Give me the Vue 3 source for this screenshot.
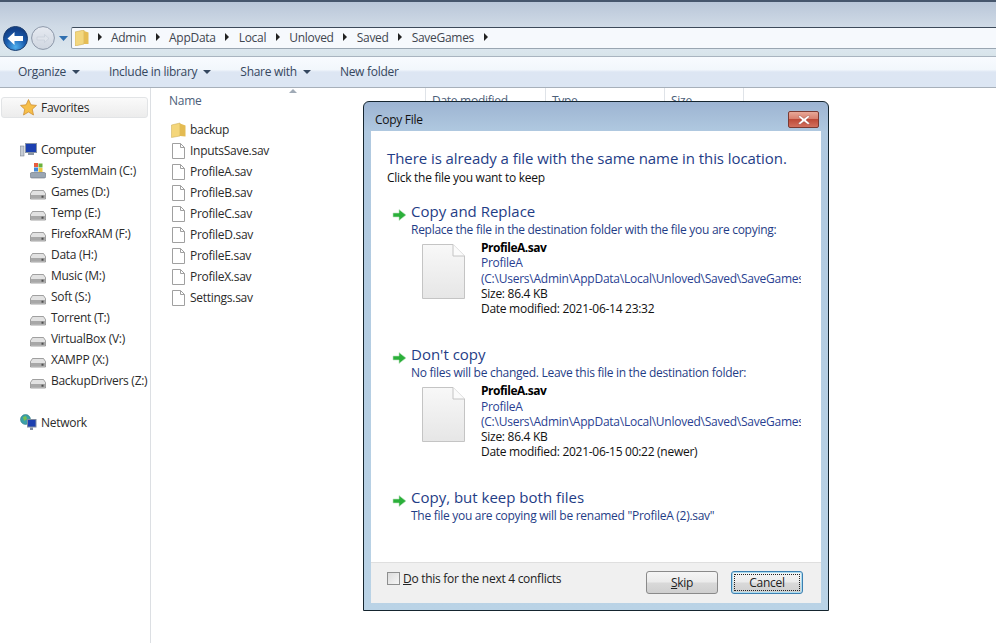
<script setup>
const crumbs = ['Admin', 'AppData', 'Local', 'Unloved', 'Saved', 'SaveGames']
const tools = [
  { label: 'Organize', caret: true },
  { label: 'Include in library', caret: true },
  { label: 'Share with', caret: true },
  { label: 'New folder', caret: false },
]
const drives = ['Games (D:)', 'Temp (E:)', 'FirefoxRAM (F:)', 'Data (H:)', 'Music (M:)', 'Soft (S:)', 'Torrent (T:)', 'VirtualBox (V:)', 'XAMPP (X:)', 'BackupDrivers (Z:)']
const files = ['InputsSave.sav', 'ProfileA.sav', 'ProfileB.sav', 'ProfileC.sav', 'ProfileD.sav', 'ProfileE.sav', 'ProfileX.sav', 'Settings.sav']
const columns = [
  { label: 'Date modified', w: 120 },
  { label: 'Type', w: 119 },
  { label: 'Size', w: 80 },
]
const path = 'C:\\Users\\Admin\\AppData\\Local\\Unloved\\Saved\\SaveGames'
</script>

<template>
  <div class="win">
    <header class="nav">
      <button class="back" aria-label="Back">
        <svg width="25" height="25" viewBox="0 0 25 25">
          <defs>
            <radialGradient id="bg" cx="50%" cy="85%" r="75%">
              <stop offset="0" stop-color="#4fb0ee" /><stop offset="0.55" stop-color="#1a5cae" /><stop offset="1" stop-color="#123f86" />
            </radialGradient>
          </defs>
          <circle cx="12.5" cy="12.5" r="12" fill="url(#bg)" stroke="#1d3f70" />
          <path d="M4.5 12.5 L11.5 6 V10 H20 V15 H11.5 V19 Z" fill="#fff" />
        </svg>
      </button>
      <span class="forward">
        <svg width="24" height="24" viewBox="0 0 24 24">
          <defs>
            <linearGradient id="fg" x1="0" y1="0" x2="0" y2="1">
              <stop offset="0" stop-color="#e6eaf1" /><stop offset="1" stop-color="#cfd6e0" />
            </linearGradient>
          </defs>
          <circle cx="12" cy="12" r="11.4" fill="url(#fg)" stroke="#8c97a8" />
          <path d="M18 12.5 L13.5 8.5 V11 H6 V14 H13.5 V16.5 Z" fill="#dfe4eb" stroke="#bdc6d2" stroke-width="0.5" />
        </svg>
      </span>
      <svg class="history" width="9" height="5" viewBox="0 0 9 5"><path d="M0 0 H9 L4.5 5 Z" fill="#2f6fb0" /></svg>
      <div class="address">
        <svg class="addr-folder" width="14" height="16" viewBox="0 0 14 16">
          <path d="M0 2 L9 0 V14 L0 16 Z" fill="#f3d77f" stroke="#d0b05a" stroke-width="0.6" />
          <path d="M9 1 L13.5 2.5 V14 L9 14 Z" fill="#e5bd56" />
        </svg>
        <span class="sep first"></span>
        <template v-for="c in crumbs" :key="c">
          <span class="crumb">{{ c }}</span>
          <span class="sep"></span>
        </template>
      </div>
    </header>

    <nav class="toolbar">
      <span v-for="t in tools" :key="t.label" class="tool">
        {{ t.label }}<i v-if="t.caret" class="caret"></i>
      </span>
    </nav>

    <div class="body">
      <aside class="side">
        <div class="fav">
          <svg width="17" height="17" viewBox="0 0 17 17"><path d="M8.5 .5 L10.9 5.8 L16.5 6.4 L12.3 10.2 L13.5 16 L8.5 13 L3.5 16 L4.7 10.2 L.5 6.4 L6.1 5.8 Z" fill="#f6bf4a" stroke="#c9862a" stroke-width=".7" /></svg>
          <span>Favorites</span>
        </div>
        <div class="tree-head computer">
          <svg width="17" height="16" viewBox="0 0 17 16">
            <rect x="5.5" y="1.5" width="11" height="9" fill="#1c3fb0" stroke="#8793a6" />
            <rect x="8" y="11" width="6" height="2" fill="#8b95a3" />
            <rect x=".5" y="4" width="3.5" height="10" fill="#c6ccd4" stroke="#6c7684" stroke-width=".5" />
          </svg>
          <span>Computer</span>
        </div>
        <div class="drive">
          <svg class="sys" width="16" height="16" viewBox="0 0 16 16">
            <rect x="4" y="0" width="4" height="4" fill="#e85d3f" /><rect x="8.5" y="0.5" width="4" height="4" fill="#6cb23c" />
            <rect x="4" y="4.5" width="4" height="4" fill="#3f86d8" /><rect x="8.5" y="5" width="4" height="4" fill="#eec73f" />
            <rect x=".3" y="9.5" width="15.4" height="5.5" rx="1.5" fill="#9aa6b3" stroke="#66717e" stroke-width=".6" />
          </svg>
          <span>SystemMain (C:)</span>
        </div>
        <div v-for="d in drives" :key="d" class="drive">
          <svg width="16" height="16" viewBox="0 0 16 16">
            <path d="M2.5 6.5 H13.5 L15.5 9.5 V15 H.5 V9.5 Z" fill="#e2e2e2" stroke="#7d7d7d" stroke-width=".7" />
            <rect x="1" y="11" width="14" height="3.5" fill="#a8a8a8" />
            <rect x="11.5" y="11.7" width="2" height="2" fill="#4e4e4e" />
          </svg>
          <span>{{ d }}</span>
        </div>
        <div class="tree-head network">
          <svg width="17" height="17" viewBox="0 0 17 17">
            <circle cx="5.5" cy="5.5" r="5" fill="#3ba0a8" stroke="#1c6d78" stroke-width=".5" />
            <path d="M3 3 L6 2 L7 5 L4 7 Z" fill="#7ac04f" />
            <rect x="7.5" y="5.5" width="8.5" height="7.5" fill="#1c3fb0" stroke="#7f8ba0" />
            <rect x="10" y="13.5" width="3" height="2.5" fill="#7f8ba0" />
          </svg>
          <span>Network</span>
        </div>
      </aside>

      <main class="files">
        <div class="columns">
          <span class="col-name">Name<i class="sort"></i></span>
          <span v-for="c in columns" :key="c.label" class="col" :style="{ width: c.w + 'px' }">{{ c.label }}</span>
        </div>
        <div class="row">
          <svg class="ico folder" width="15" height="16" viewBox="0 0 15 16">
            <path d="M.5 3 L9 1 V14 L.5 15.5 Z" fill="#f4d67a" stroke="#c9a84e" stroke-width=".5" />
            <path d="M9 1.5 L14.5 3.5 V14.5 L9 14 Z" fill="#e4bb52" />
          </svg>
          <span>backup</span>
        </div>
        <div v-for="f in files" :key="f" class="row">
          <svg class="ico" width="13" height="16" viewBox="0 0 13 16">
            <path d="M.5 .5 H8.5 L12.5 4.5 V15.5 H.5 Z M8.5 .5 V4.5 H12.5" fill="#fff" stroke="#a0a0a0" />
          </svg>
          <span>{{ f }}</span>
        </div>
      </main>
    </div>

    <section class="dialog">
      <div class="title">
        <span>Copy File</span>
        <span class="close">
          <svg width="14" height="10" viewBox="0 0 14 10"><path d="M3 .5 L7 3.5 L11 .5 L13 1.5 L9 5 L13 8.5 L11 9.5 L7 6.5 L3 9.5 L1 8.5 L5 5 L1 1.5 Z" fill="#fff" stroke="#8a3a30" stroke-width=".4" /></svg>
        </span>
      </div>
      <div class="pane">
        <div class="content">
          <h1>There is already a file with the same name in this location.</h1>
          <p class="sub">Click the file you want to keep</p>

          <div class="opt opt-replace">
            <svg class="arrow" width="15" height="14" viewBox="0 0 15 14"><path d="M1 5 H7 V1.5 L14 7 L7 12.5 V9 H1 Z" fill="#2bb03a" stroke="#bfe3c2" stroke-width=".6" /></svg>
            <div class="opt-main">
              <h2>Copy and Replace</h2>
              <p class="desc">Replace the file in the destination folder with the file you are copying:</p>
              <div class="file">
                <svg class="big" width="43" height="55" viewBox="0 0 43 55">
                  <defs><linearGradient id="pg" x1="0" y1="0" x2="0" y2="1"><stop offset="0" stop-color="#f8f8f8" /><stop offset="1" stop-color="#e6e6e6" /></linearGradient></defs>
                  <path d="M.5 .5 H31 L42.5 12 V54.5 H.5 Z" fill="url(#pg)" stroke="#c4c4c4" /><path d="M31 .5 V12 H42.5" fill="#fbfbfb" stroke="#c4c4c4" />
                </svg>
                <div class="meta">
                  <b>ProfileA.sav</b>
                  <a>ProfileA</a>
                  <a class="path">({{ path }})</a>
                  <span>Size: 86.4 KB</span>
                  <span>Date modified: 2021-06-14 23:32</span>
                </div>
              </div>
            </div>
          </div>

          <div class="opt opt-skip">
            <svg class="arrow" width="15" height="14" viewBox="0 0 15 14"><path d="M1 5 H7 V1.5 L14 7 L7 12.5 V9 H1 Z" fill="#2bb03a" stroke="#bfe3c2" stroke-width=".6" /></svg>
            <div class="opt-main">
              <h2>Don't copy</h2>
              <p class="desc">No files will be changed. Leave this file in the destination folder:</p>
              <div class="file">
                <svg class="big" width="43" height="55" viewBox="0 0 43 55">
                  <path d="M.5 .5 H31 L42.5 12 V54.5 H.5 Z" fill="url(#pg)" stroke="#c4c4c4" /><path d="M31 .5 V12 H42.5" fill="#fbfbfb" stroke="#c4c4c4" />
                </svg>
                <div class="meta">
                  <b>ProfileA.sav</b>
                  <a>ProfileA</a>
                  <a class="path">({{ path }})</a>
                  <span>Size: 86.4 KB</span>
                  <span>Date modified: 2021-06-15 00:22 (newer)</span>
                </div>
              </div>
            </div>
          </div>

          <div class="opt opt-both">
            <svg class="arrow" width="15" height="14" viewBox="0 0 15 14"><path d="M1 5 H7 V1.5 L14 7 L7 12.5 V9 H1 Z" fill="#2bb03a" stroke="#bfe3c2" stroke-width=".6" /></svg>
            <div class="opt-main">
              <h2>Copy, but keep both files</h2>
              <p class="desc">The file you are copying will be renamed "ProfileA (2).sav"</p>
            </div>
          </div>
        </div>
        <footer class="foot">
          <label class="check"><i class="box"></i><span><u>D</u>o this for the next 4 conflicts</span></label>
          <div class="btns">
            <button class="btn"><u>S</u>kip</button>
            <button class="btn primary"><span class="focus">Cancel</span></button>
          </div>
        </footer>
      </div>
    </section>
  </div>
</template>

<style>
html, body { margin: 0; background: #fff; }
</style>

<style scoped>
.win {
  position: relative;
  width: 996px;
  height: 643px;
  overflow: hidden;
  background: #fff;
  font-family: "Open Sans", "Noto Sans", sans-serif;
  font-size: 12px;
  letter-spacing: -0.28px;
  color: #2b2b2b;
}
.nav {
  box-sizing: border-box;
  height: 57px;
  display: flex;
  align-items: flex-start;
  padding: 24px 0 0 3px;
  border-top: 2px solid #46566c;
  border-bottom: 1px solid #a9b4c0;
  background: linear-gradient(#b9c6d8 0, #cfdae6 24px, #dbe6ee 48px, #d8e4ea 100%);
}
.back { padding: 0; border: 0; background: none; height: 25px; display: block; }
.forward { margin-left: 3px; height: 24px; display: block; }
.history { margin: 10px 0 0 4px; }
.address {
  flex: 1;
  box-sizing: border-box;
  height: 22px;
  margin-top: 1px;
  margin-left: 3px;
  display: flex;
  align-items: center;
  background: #f6f9fd;
  border-top: 1px solid #3d4a5a;
  border-bottom: 1px solid #9aa6b2;
  border-left: 1px solid #8d9aa8;
  border-radius: 2px 0 0 2px;
  padding: 0 0 2px 3px;
}
.addr-folder { margin-right: 9px; margin-top: 2px; }
.sep {
  width: 0;
  height: 0;
  border-left: 4px solid #222;
  border-top: 4px solid transparent;
  border-bottom: 4px solid transparent;
  margin: 0 9.5px;
}
.sep.first { margin: 0 9px 0 0; }
.crumb { color: #3f4650; }
.toolbar {
  box-sizing: border-box;
  height: 31px;
  display: flex;
  align-items: center;
  padding: 0 0 2px 18px;
  gap: 29px;
  background: linear-gradient(#f8fbff 0, #f2f7fc 42%, #dde6f3 50%, #dce6f3 100%);
  border-bottom: 1px solid #a7b0ba;
  color: #36475e;
}
.tool { display: flex; align-items: center; }
.caret {
  width: 0;
  height: 0;
  margin-left: 6px;
  margin-top: 1px;
  border-top: 4px solid #34475f;
  border-left: 4px solid transparent;
  border-right: 4px solid transparent;
}
.body { display: flex; height: 556px; }
.side {
  box-sizing: border-box;
  width: 151px;
  flex: none;
  border-right: 1px solid #dcdfe3;
  padding: 9px 0 0 1px;
}
.side svg { flex: none; }
.fav {
  box-sizing: border-box;
  height: 21px;
  width: 147px;
  display: flex;
  align-items: center;
  gap: 4px;
  padding-left: 18px;
  border: 1px solid #e2e4e6;
  border-radius: 3px;
  background: linear-gradient(#fafafa, #ececec);
}
.tree-head, .drive { display: flex; align-items: center; height: 21px; }
.tree-head { padding-left: 19px; gap: 4px; }
.computer { margin-top: 21px; }
.network { margin-top: 21px; }
.drive { padding-left: 29px; gap: 5px; white-space: nowrap; }
.files { flex: 1; min-width: 0; position: relative; }
.columns { display: flex; height: 31px; align-items: flex-start; color: #4c607a; }
.col-name {
  position: relative;
  box-sizing: border-box;
  width: 274px;
  padding: 4px 0 0 18px;
}
.sort {
  position: absolute;
  left: 138px;
  top: 1px;
  width: 0;
  height: 0;
  border-bottom: 4px solid #a0aab6;
  border-left: 4px solid transparent;
  border-right: 4px solid transparent;
}
.col {
  box-sizing: border-box;
  padding: 4px 0 0 6px;
  height: 26px;
  border-left: 1px solid #dfe3e8;
}
.col:last-child { border-right: 1px solid #dfe3e8; }
.row { display: flex; align-items: center; height: 21px; padding-left: 21px; gap: 5px; }
.row .ico { flex: none; }
.row .folder { margin: 0 -1px; }
.dialog {
  position: absolute;
  left: 363px;
  top: 101px;
  box-sizing: border-box;
  width: 466px;
  height: 510px;
  display: flex;
  flex-direction: column;
  border: 1px solid #15252f;
  border-radius: 6px 6px 0 0;
  background: linear-gradient(#9db4d2 0, #b0c9e0 30px, #bad3e6 100%);
  padding: 0 7px 7px;
}
.title {
  box-sizing: border-box;
  height: 29px;
  flex: none;
  padding: 6px 2px 0 4px;
  display: flex;
  align-items: center;
  justify-content: space-between;
  color: #111;
}
.close {
  box-sizing: border-box;
  width: 31px;
  height: 17px;
  display: flex;
  align-items: center;
  justify-content: center;
  border: 1px solid #7a3a32;
  border-radius: 2px;
  background: linear-gradient(#e8a898 0, #d9806e 45%, #bd4a38 50%, #d2705e 100%);
}
.pane {
  flex: 1;
  min-height: 0;
  display: flex;
  flex-direction: column;
  background: #fff;
  overflow: hidden;
}
.content { flex: 1; min-height: 0; padding: 17px 20px 0 16px; overflow: hidden; }
h1 {
  margin: 0;
  font-size: 15px;
  font-weight: 400;
  line-height: 20px;
  letter-spacing: -0.07px;
  color: #1f3d86;
  white-space: nowrap;
}
.sub { margin: 1px 0 0; line-height: 17px; color: #111; }
.opt { display: flex; align-items: flex-start; }
.opt-replace { margin-top: 15px; }
.opt-skip { margin-top: 28px; }
.opt-both { margin-top: 27px; }
.arrow { margin: 7px 4px 0 5px; flex: none; }
.opt-main { min-width: 0; flex: 1; }
h2 {
  margin: 0;
  font-size: 15px;
  font-weight: 400;
  line-height: 21px;
  letter-spacing: 0;
  color: #1f3d86;
  white-space: nowrap;
}
.desc { margin: 0; line-height: 15px; color: #1f3d86; white-space: nowrap; }
.file { display: flex; margin-top: 3px; padding-left: 11px; }
.big { flex: none; margin: 4px 16px 0 0; }
.meta { display: flex; flex-direction: column; line-height: 15.25px; min-width: 0; overflow: hidden; white-space: nowrap; color: #111; }
.meta b { font-weight: 700; color: #000; letter-spacing: -0.5px; }
.meta a { color: #2a3f92; }
.meta .path { letter-spacing: -0.24px; }
.foot {
  box-sizing: border-box;
  height: 41px;
  flex: none;
  display: flex;
  justify-content: space-between;
  background: #f0f0f0;
  border-top: 1px solid #dfdfdf;
  padding: 0 18px 0 16px;
}
.check { display: flex; align-items: center; gap: 3px; height: 30px; color: #222; }
.box {
  box-sizing: border-box;
  width: 13px;
  height: 13px;
  border: 1px solid #8e8f8f;
  background: linear-gradient(135deg, #dcdcdc, #f6f6f6);
}
.btns { display: flex; gap: 13px; padding-top: 8px; }
.btn {
  box-sizing: border-box;
  width: 72px;
  height: 23px;
  padding: 0;
  font: inherit;
  letter-spacing: inherit;
  color: #222;
  border: 1px solid #8a8a8a;
  border-radius: 3px;
  background: linear-gradient(#f5f5f5 0, #ebebeb 48%, #d9d9d9 52%, #cfcfcf 100%);
}
.primary { border-color: #3c7fb1; box-shadow: inset 0 0 0 1px #a9dcf0; }
.focus {
  display: flex;
  align-items: center;
  justify-content: center;
  margin: 2px;
  height: 17px;
  outline: 1px dotted #222;
  outline-offset: -1px;
}
</style>
